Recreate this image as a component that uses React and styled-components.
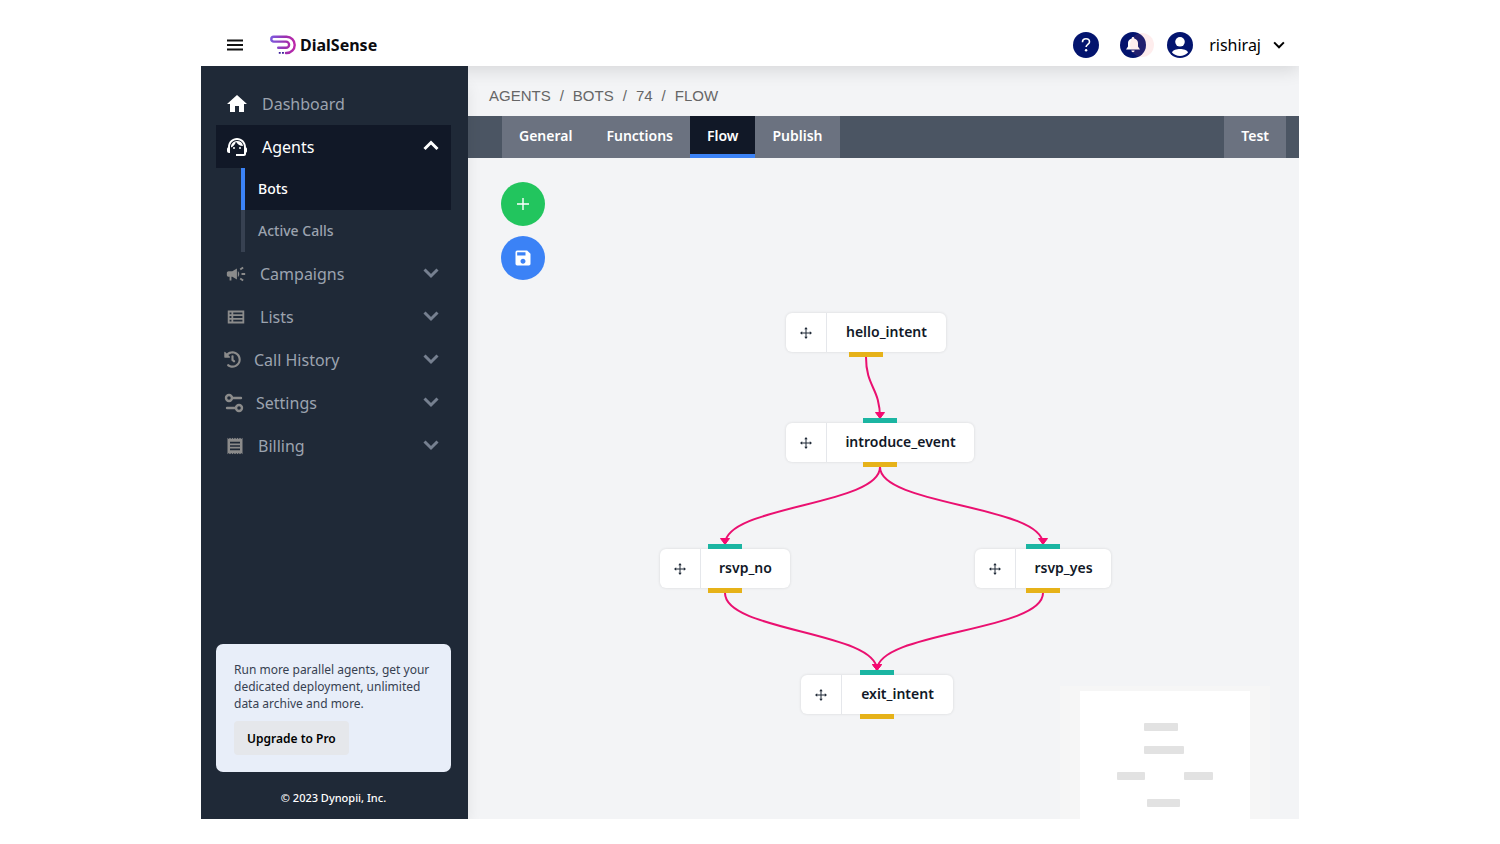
import React from 'react';
import styled, { createGlobalStyle } from 'styled-components';
import {
  MdHome,
  MdSupportAgent,
  MdCampaign,
  MdOutlineViewList,
  MdReceipt,
  MdSave,
} from 'react-icons/md';
import { FaHistory } from 'react-icons/fa';
import { Settings2 } from 'lucide-react';

const GlobalStyle = createGlobalStyle`
  * {
    box-sizing: border-box;
  }

  body {
    margin: 0;
    background: #ffffff;
    font-family: 'Noto Sans', 'Open Sans', sans-serif;
  }

  button {
    border: 0;
    padding: 0;
    background: none;
    font: inherit;
    color: inherit;
    cursor: pointer;
  }

  a {
    color: inherit;
    text-decoration: none;
  }

  svg {
    display: block;
    flex-shrink: 0;
  }
`;

const Page = styled.div`
  display: flex;
  flex-direction: column;
  min-height: 100vh;
  padding: 24px 201px 25px;
`;

const Frame = styled.div`
  flex: 1;
  display: flex;
  flex-direction: column;
  overflow: hidden;
`;

/* ---------- header ---------- */

const Header = styled.header`
  position: relative;
  z-index: 1;
  display: flex;
  align-items: center;
  justify-content: space-between;
  height: 42px;
  padding: 0 14px 0 26px;
  background: #ffffff;
  box-shadow: 0 4px 18px rgba(0, 0, 0, 0.12);
`;

const HeaderGroup = styled.div`
  display: flex;
  align-items: center;
  gap: ${({ $gap }) => $gap}px;
`;

const IconButton = styled.button`
  display: flex;
  align-items: center;
`;

const Brand = styled.a`
  display: flex;
  align-items: center;
  gap: 4px;
  font-size: 16px;
  font-weight: 700;
  color: #0b0b0f;
`;

const UserButton = styled.button`
  display: flex;
  align-items: center;
  gap: 12px;
  font-size: 16px;
  color: #000000;
`;

const UserName = styled.span`
  margin-left: 4px;
`;

const Bell = styled.button`
  position: relative;
  display: flex;
`;

const Ping = styled.span`
  position: absolute;
  top: 1px;
  right: -8px;
  width: 24px;
  height: 24px;
  border-radius: 50%;
  background: rgba(248, 113, 113, 0.13);
`;

/* ---------- sidebar ---------- */

const Body = styled.div`
  flex: 1;
  display: flex;
`;

const Sidebar = styled.aside`
  position: relative;
  z-index: 2;
  display: flex;
  flex-direction: column;
  flex: 0 0 267px;
  padding: 16px 17px 0 15px;
  background: #1f2937;
  box-shadow: 8px 12px 14px -8px rgba(0, 0, 0, 0.08);
`;

const Nav = styled.nav`
  display: flex;
  flex-direction: column;
`;

const NavItem = styled.button`
  display: flex;
  align-items: center;
  width: 100%;
  height: 43px;
  padding: 0 12px 0 ${({ $inset }) => $inset || 9}px;
  gap: ${({ $gap }) => $gap || 13}px;
  background: ${({ $open }) => ($open ? '#111827' : 'transparent')};
  color: ${({ $open }) => ($open ? '#ffffff' : '#9ca3af')};
  font-size: 16px;
  text-align: left;
`;

const NavIcon = styled.span`
  color: ${({ $bright }) => ($bright ? '#ffffff' : '#8b8b8b')};
`;

const NavLabel = styled.span`
  flex: 1;
`;

const NavArrow = styled.span`
  padding-bottom: 2px;
  color: ${({ $open }) => ($open ? '#ffffff' : '#768090')};
`;

const SubNav = styled.div`
  display: flex;
  flex-direction: column;
  margin-left: 25px;
`;

const SubItem = styled.a`
  display: flex;
  align-items: center;
  height: 42px;
  padding: 0 0 2px 13px;
  border-left: 4px solid ${({ $active }) => ($active ? '#3b82f6' : '#374151')};
  background: ${({ $active }) => ($active ? '#111827' : 'transparent')};
  color: ${({ $active }) => ($active ? '#ffffff' : '#9ca3af')};
  font-size: 14px;
  font-weight: 500;
`;

const Promo = styled.section`
  margin-top: auto;
  padding: 17px 17px 17px 18px;
  border-radius: 7px;
  background: #e8eef9;
  color: #374151;
`;

const PromoText = styled.p`
  margin: 0 0 9px;
  font-size: 12px;
  line-height: 17px;
`;

const UpgradeButton = styled.button`
  height: 34px;
  padding: 0 13px;
  border-radius: 4px;
  background: #e5e7eb;
  color: #000000;
  font-size: 12px;
  font-weight: 600;
`;

const Copyright = styled.p`
  margin: 0;
  padding: 17px 0 13px;
  font-size: 11px;
  line-height: 17px;
  font-weight: 500;
  text-align: center;
  color: #ffffff;
`;

/* ---------- main area ---------- */

const Main = styled.main`
  flex: 1;
  min-width: 0;
  display: flex;
  flex-direction: column;
  background: #f3f4f6;
`;

const Breadcrumbs = styled.nav`
  display: flex;
  align-items: center;
  gap: 9px;
  height: 50px;
  padding: 8px 21px 0;
  font-family: 'Liberation Sans', Arial, sans-serif;
  font-size: 15px;
  color: #666666;
`;

const TabBar = styled.div`
  display: flex;
  justify-content: space-between;
  height: 42px;
  padding: 0 13px 0 34px;
  background: #4b5563;
`;

const Tabs = styled.div`
  display: flex;
`;

const Tab = styled.button`
  padding: 0 17px;
  border-bottom: 4px solid ${({ $active }) => ($active ? '#3b82f6' : '#6b7280')};
  background: ${({ $active }) => ($active ? '#111827' : '#6b7280')};
  color: #ffffff;
  font-size: 14px;
  font-weight: 600;
`;

const Canvas = styled.div`
  position: relative;
  flex: 1;
  min-height: 600px;
  overflow: hidden;
`;

const Tools = styled.div`
  display: flex;
  flex-direction: column;
  align-items: flex-start;
  gap: 10px;
  padding: 24px 33px;
`;

const RoundButton = styled.button`
  display: flex;
  align-items: center;
  justify-content: center;
  width: 44px;
  height: 44px;
  border-radius: 50%;
  background: ${({ $color }) => $color};
  color: #ffffff;
`;

const Edges = styled.svg`
  position: absolute;
  top: 0;
  left: 0;
  width: 100%;
  height: 100%;
  pointer-events: none;
`;

const Node = styled.div`
  position: absolute;
  top: ${({ $y }) => $y}px;
  left: ${({ $x }) => $x}px;
  display: flex;
  width: ${({ $w }) => $w}px;
  height: 39px;
  border-radius: 6px;
  background: #ffffff;
  box-shadow: 0 0 3px rgba(0, 0, 0, 0.12);
  color: #111827;
  font-size: 14px;
  font-weight: 600;
`;

const Grip = styled.span`
  display: flex;
  align-items: center;
  justify-content: center;
  flex: 0 0 41px;
  border-right: 1px solid #e5e7eb;
`;

const NodeLabel = styled.span`
  flex: 1;
  display: flex;
  align-items: center;
  justify-content: center;
  padding-bottom: 2px;
`;

const Handle = styled.span`
  position: absolute;
  left: 50%;
  ${({ $side }) => ($side === 'top' ? 'top: -5px;' : 'bottom: -5px;')}
  width: 34px;
  height: 5px;
  margin-left: -17px;
  background: ${({ $side }) => ($side === 'top' ? '#1bb5a2' : '#e6b219')};
`;

const MiniMap = styled.svg`
  position: absolute;
  right: 29px;
  bottom: 0;
  width: 210px;
  height: 133px;
`;

const NODES = [
  { id: 'hello_intent', x: 318, y: 155, w: 160, source: true },
  { id: 'introduce_event', x: 318, y: 265, w: 188, target: true, source: true },
  { id: 'rsvp_no', x: 192, y: 391, w: 130, target: true, source: true },
  { id: 'rsvp_yes', x: 507, y: 391, w: 136, target: true, source: true },
  { id: 'exit_intent', x: 333, y: 517, w: 152, target: true, source: true },
];

const EDGES = [
  ['hello_intent', 'introduce_event'],
  ['introduce_event', 'rsvp_no'],
  ['introduce_event', 'rsvp_yes'],
  ['rsvp_no', 'exit_intent'],
  ['rsvp_yes', 'exit_intent'],
];

const MINI_NODES = [
  [84, 37, 34],
  [84, 60, 40],
  [57, 86, 28],
  [124, 86, 29],
  [87, 113, 33],
];

const NAV = [
  { label: 'Campaigns', icon: <MdCampaign size={22} /> },
  { label: 'Lists', icon: <MdOutlineViewList size={22} /> },
  { label: 'Call History', icon: <FaHistory size={17} />, inset: 8 },
  { label: 'Settings', icon: <Settings2 size={24} strokeWidth={2.4} />, inset: 6, gap: 10 },
  { label: 'Billing', icon: <MdReceipt size={20} /> },
];

const byId = (id) => NODES.find((n) => n.id === id);

// vertical bezier from the bottom handle of one node to the top handle of the next
const edgePath = ([from, to]) => {
  const a = byId(from);
  const b = byId(to);
  const x1 = a.x + a.w / 2;
  const y1 = a.y + 44;
  const x2 = b.x + b.w / 2;
  const y2 = b.y - 5;
  const mid = (y1 + y2) / 2;
  return `M${x1} ${y1} C${x1} ${mid} ${x2} ${mid} ${x2} ${y2}`;
};

const Chevron = ({ up, size = 16, weight = 3 }) => (
  <svg width={size} height={size} viewBox="0 0 16 16" fill="none" stroke="currentColor" strokeWidth={weight}>
    <path d={up ? 'M1.5 11 8 4.5l6.5 6.5' : 'M1.5 4.5 8 11l6.5-6.5'} />
  </svg>
);

const Logo = () => (
  <svg width="26" height="20" viewBox="0 0 26 20" fill="none">
    <defs>
      <linearGradient id="brand" x1="0" y1="0" x2="26" y2="0" gradientUnits="userSpaceOnUse">
        <stop offset="0" stopColor="#7a5be0" />
        <stop offset="0.6" stopColor="#9b2fae" />
        <stop offset="1" stopColor="#c126a8" />
      </linearGradient>
    </defs>
    <path
      d="M16 18h.600a8.100 8.100 0 0 0 0-16.200H3.700a2.400 2.400 0 0 0 0 4.800H16a3.100 3.100 0 0 1 0 6.200H8.200"
      stroke="url(#brand)"
      strokeWidth="2.400"
      strokeLinecap="round"
    />
    <path d="M8.800 17.900h1.900M12 17.900h1.900" stroke="#3b1d9a" strokeWidth="1.900" />
  </svg>
);

const MoveIcon = () => (
  <svg width="12" height="12" viewBox="0 0 12 12" fill="#1f2937">
    <path d="M6 1.500v9M1.500 6h9" stroke="#1f2937" strokeWidth="1" />
    <path d="M6 0l1.700 2.200H4.300zM6 12l1.700-2.200H4.300zM0 6l2.200-1.700v3.400zM12 6L9.800 4.300v3.400z" />
  </svg>
);

const FlowNode = ({ node }) => (
  <Node $x={node.x} $y={node.y} $w={node.w}>
    <Grip>
      <MoveIcon />
    </Grip>
    <NodeLabel>{node.id}</NodeLabel>
    {node.target && <Handle $side="top" />}
    {node.source && <Handle $side="bottom" />}
  </Node>
);

const App = () => {
  return (
    <Page>
      <GlobalStyle />
      <Frame>
        <Header>
          <HeaderGroup $gap={27}>
            <IconButton aria-label="Toggle menu">
              <svg width="16" height="12" viewBox="0 0 16 12" stroke="#111111" strokeWidth="1.800">
                <path d="M0 1.500h16M0 6h16M0 10.500h16" />
              </svg>
            </IconButton>
            <Brand href="#">
              <Logo />
              DialSense
            </Brand>
          </HeaderGroup>
          <HeaderGroup $gap={21}>
            <IconButton aria-label="Help">
              <svg width="26" height="26" viewBox="0 0 26 26" fill="none">
                <circle cx="13" cy="13" r="13" fill="#03146e" />
                <path
                  d="M9.500 10.200c0-2 1.500-3.400 3.500-3.400s3.500 1.300 3.500 3.100c0 2.400-3.400 2.600-3.400 5.200"
                  stroke="#ffffff"
                  strokeWidth="1.600"
                />
                <circle cx="13.100" cy="18.300" r="1.200" fill="#ffffff" />
              </svg>
            </IconButton>
            <Bell aria-label="Notifications">
              <svg width="26" height="26" viewBox="0 0 26 26">
                <circle cx="13" cy="13" r="13" fill="#03146e" />
                <path
                  d="M13 5a1.300 1.300 0 0 0-1.300 1.400C9.300 7 8 8.800 8 11v3.600L6 17.600h14l-2-3V11c0-2.200-1.300-4-3.700-4.600A1.300 1.300 0 0 0 13 5zM11.400 18.600a1.600 1.600 0 0 0 3.200 0z"
                  fill="#ffffff"
                />
              </svg>
              <Ping />
            </Bell>
            <UserButton>
              <svg width="26" height="26" viewBox="0 0 26 26">
                <circle cx="13" cy="13" r="13" fill="#03146e" />
                <circle cx="13" cy="9.800" r="4.800" fill="#ffffff" />
                <path d="M5 20.500c1-2.700 4.500-3.500 8-3.500s7 .8 8 3.500a11 11 0 0 1-16 0z" fill="#ffffff" />
              </svg>
              <UserName>rishiraj</UserName>
              <Chevron size={12} weight={2.6} />
            </UserButton>
          </HeaderGroup>
        </Header>

        <Body>
          <Sidebar>
            <Nav aria-label="Main">
              <NavItem>
                <NavIcon $bright>
                  <MdHome size={24} />
                </NavIcon>
                <NavLabel>Dashboard</NavLabel>
              </NavItem>
              <NavItem $open aria-expanded="true">
                <NavIcon $bright>
                  <MdSupportAgent size={24} />
                </NavIcon>
                <NavLabel>Agents</NavLabel>
                <NavArrow $open>
                  <Chevron up />
                </NavArrow>
              </NavItem>
              <SubNav>
                <SubItem href="#" $active>
                  Bots
                </SubItem>
                <SubItem href="#">Active Calls</SubItem>
              </SubNav>
              {NAV.map((item) => (
                <NavItem key={item.label} $inset={item.inset} $gap={item.gap} aria-expanded="false">
                  <NavIcon>{item.icon}</NavIcon>
                  <NavLabel>{item.label}</NavLabel>
                  <NavArrow>
                    <Chevron />
                  </NavArrow>
                </NavItem>
              ))}
            </Nav>
            <Promo>
              <PromoText>
                Run more parallel agents, get your dedicated deployment, unlimited data archive and more.
              </PromoText>
              <UpgradeButton>Upgrade to Pro</UpgradeButton>
            </Promo>
            <Copyright>© 2023 Dynopii, Inc.</Copyright>
          </Sidebar>

          <Main>
            <Breadcrumbs aria-label="Breadcrumb">
              <a href="#">AGENTS</a>
              <span>/</span>
              <a href="#">BOTS</a>
              <span>/</span>
              <a href="#">74</a>
              <span>/</span>
              <a href="#">FLOW</a>
            </Breadcrumbs>
            <TabBar>
              <Tabs>
                <Tab>General</Tab>
                <Tab>Functions</Tab>
                <Tab $active>Flow</Tab>
                <Tab>Publish</Tab>
              </Tabs>
              <Tab>Test</Tab>
            </TabBar>
            <Canvas>
              <Tools>
                <RoundButton $color="#22c55e" aria-label="Add node">
                  <svg width="12" height="12" viewBox="0 0 12 12" stroke="currentColor" strokeWidth="1.400">
                    <path d="M6 0v12M0 6h12" />
                  </svg>
                </RoundButton>
                <RoundButton $color="#3b82f6" aria-label="Save flow">
                  <MdSave size={20} />
                </RoundButton>
              </Tools>
              <Edges>
                <defs>
                  <marker
                    id="arrow"
                    viewBox="0 0 10 7"
                    refX="5"
                    refY="6"
                    markerWidth="10"
                    markerHeight="7"
                    markerUnits="userSpaceOnUse"
                  >
                    <path d="M0.500 0.500h9L5 6.500z" fill="#f50a70" stroke="#f50a70" strokeLinejoin="round" />
                  </marker>
                </defs>
                {EDGES.map((edge) => (
                  <path
                    key={edge.join('-')}
                    d={edgePath(edge)}
                    fill="none"
                    stroke="#ea1070"
                    strokeWidth="2"
                    markerEnd="url(#arrow)"
                  />
                ))}
              </Edges>
              {NODES.map((node) => (
                <FlowNode key={node.id} node={node} />
              ))}
              <MiniMap viewBox="0 0 210 133">
                <rect width="210" height="133" fill="#f6f6f6" />
                <rect x="20" y="5" width="170" height="128" fill="#ffffff" />
                {MINI_NODES.map(([x, y, w]) => (
                  <rect key={`${x}-${y}`} x={x} y={y} width={w} height="8" rx="1" fill="#e2e2e2" />
                ))}
              </MiniMap>
            </Canvas>
          </Main>
        </Body>
      </Frame>
    </Page>
  );
};

export default App;
